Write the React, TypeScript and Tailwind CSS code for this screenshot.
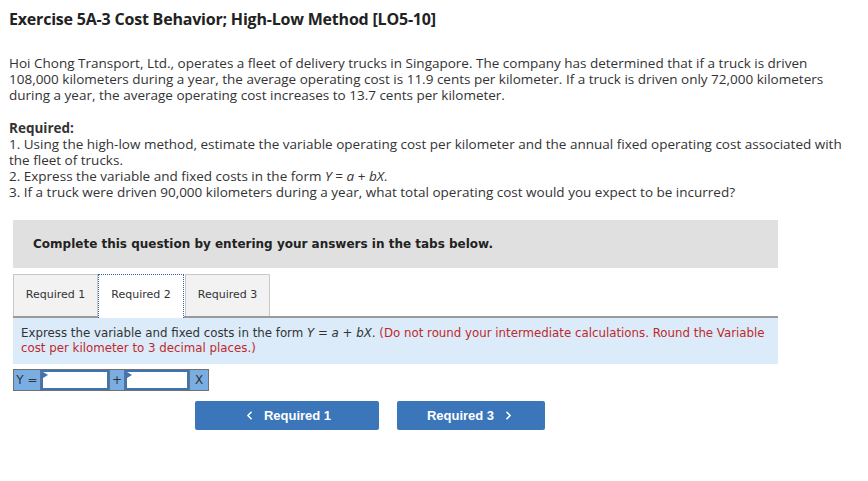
import { ChevronLeft, ChevronRight } from 'lucide-react'

const sans = { fontFamily: '"Open Sans", "Liberation Sans", sans-serif' }

function EquationCell({ children, w }: { children: string; w: string }) {
  return (
    <div className={`flex h-full ${w} items-center justify-center bg-[#7aaee3] text-[12px] text-[#333] font-['DejaVu_Sans',sans-serif]`}>
      {children}
    </div>
  )
}

function EquationInput({ w }: { w: string }) {
  return (
    <div className={`relative h-full ${w} border-2 border-[#3d74b8] bg-white`}>
      <span className="absolute left-0 top-0 h-0 w-0 border-y-[3px] border-l-[5px] border-y-transparent border-l-[#3d74b8]" />
    </div>
  )
}

export default function App() {
  return (
    <div className="min-h-screen w-[868px] bg-white text-[#222]">
      <div className="px-[9px]" style={sans}>
        <h1 className="pt-[8px] text-[16px] font-bold leading-[22px] tracking-[-0.2px] text-[#222]">
          Exercise 5A-3 Cost Behavior; High-Low Method [LO5-10]
        </h1>
        <p className="mt-[25px] whitespace-nowrap text-[13.5px] leading-[16px] text-[#333]">
          Hoi Chong Transport, Ltd., operates a fleet of delivery trucks in Singapore. The company has determined that if a truck is driven
          <br />
          108,000 kilometers during a year, the average operating cost is 11.9 cents per kilometer. If a truck is driven only 72,000 kilometers
          <br />
          during a year, the average operating cost increases to 13.7 cents per kilometer.
        </p>
        <div className="mt-[17px] whitespace-nowrap text-[13.5px] leading-[16px] text-[#333]">
          <p className="font-bold">Required:</p>
          <p>
            1. Using the high-low method, estimate the variable operating cost per kilometer and the annual fixed operating cost associated with
            <br />
            the fleet of trucks.
          </p>
          <p>
            2. Express the variable and fixed costs in the form <i>Y</i> = <i>a</i> + <i>bX</i>.
          </p>
          <p>3. If a truck were driven 90,000 kilometers during a year, what total operating cost would you expect to be incurred?</p>
        </div>
      </div>

      <div className="ml-[13px] w-[765px] font-['DejaVu_Sans',sans-serif]">
        <div className="mt-[20px] flex h-[48px] items-center bg-[#e0e0e0] pl-[20px] text-[12px] font-bold text-[#222]">
          Complete this question by entering your answers in the tabs below.
        </div>

        <div className="mt-[6px] flex h-[44px] items-start border-b-2 border-[#9a9a9a]">
          <div className="flex h-[42px] w-[85px] items-center justify-center border border-b-0 border-[#c8c8c8] bg-[#f2f2f2] text-[11px] text-[#333]">
            Required 1
          </div>
          <div className="relative z-10 flex h-[44px] w-[86px] items-center justify-center border border-dotted border-b-0 border-[#2f5fa8] bg-white pb-[2px] text-[11px] text-[#333]">
            Required 2
          </div>
          <div className="ml-[1px] flex h-[42px] w-[85px] items-center justify-center border border-b-0 border-[#c8c8c8] bg-[#f2f2f2] text-[11px] text-[#333]">
            Required 3
          </div>
        </div>

        <div className="h-[46px] whitespace-nowrap bg-[#dbebf9] px-[8px] pt-[8px] text-[11.8px] leading-[15px] text-[#333]">
          Express the variable and fixed costs in the form <i>Y</i> = <i>a</i> + <i>bX</i>.{' '}
          <span className="text-[#c0282d]">
            (Do not round your intermediate calculations. Round the Variable
            <br />
            cost per kilometer to 3 decimal places.)
          </span>
        </div>

        <div className="mt-[5px] flex h-[22px] w-[196px] gap-[1px] border border-[#707070] bg-[#707070]">
          <EquationCell w="w-[26px]">Y =</EquationCell>
          <EquationInput w="w-[68px]" />
          <EquationCell w="w-[15px]">+</EquationCell>
          <EquationInput w="w-[64px]" />
          <EquationCell w="w-[18px]">X</EquationCell>
        </div>
      </div>

      <div className="mt-[10px] flex gap-[18px] pl-[195px] font-['Liberation_Sans',sans-serif]">
        <button
          type="button"
          className="flex h-[29px] w-[184px] items-center justify-center gap-[8px] rounded-[2px] bg-[#3a76b9] text-[13px] font-bold text-white"
        >
          <ChevronLeft className="h-[13px] w-[13px]" strokeWidth={3} />
          Required 1
        </button>
        <button
          type="button"
          className="flex h-[29px] w-[148px] items-center justify-center gap-[8px] rounded-[2px] bg-[#3a76b9] text-[13px] font-bold text-white"
        >
          Required 3
          <ChevronRight className="h-[13px] w-[13px]" strokeWidth={3} />
        </button>
      </div>
    </div>
  )
}
